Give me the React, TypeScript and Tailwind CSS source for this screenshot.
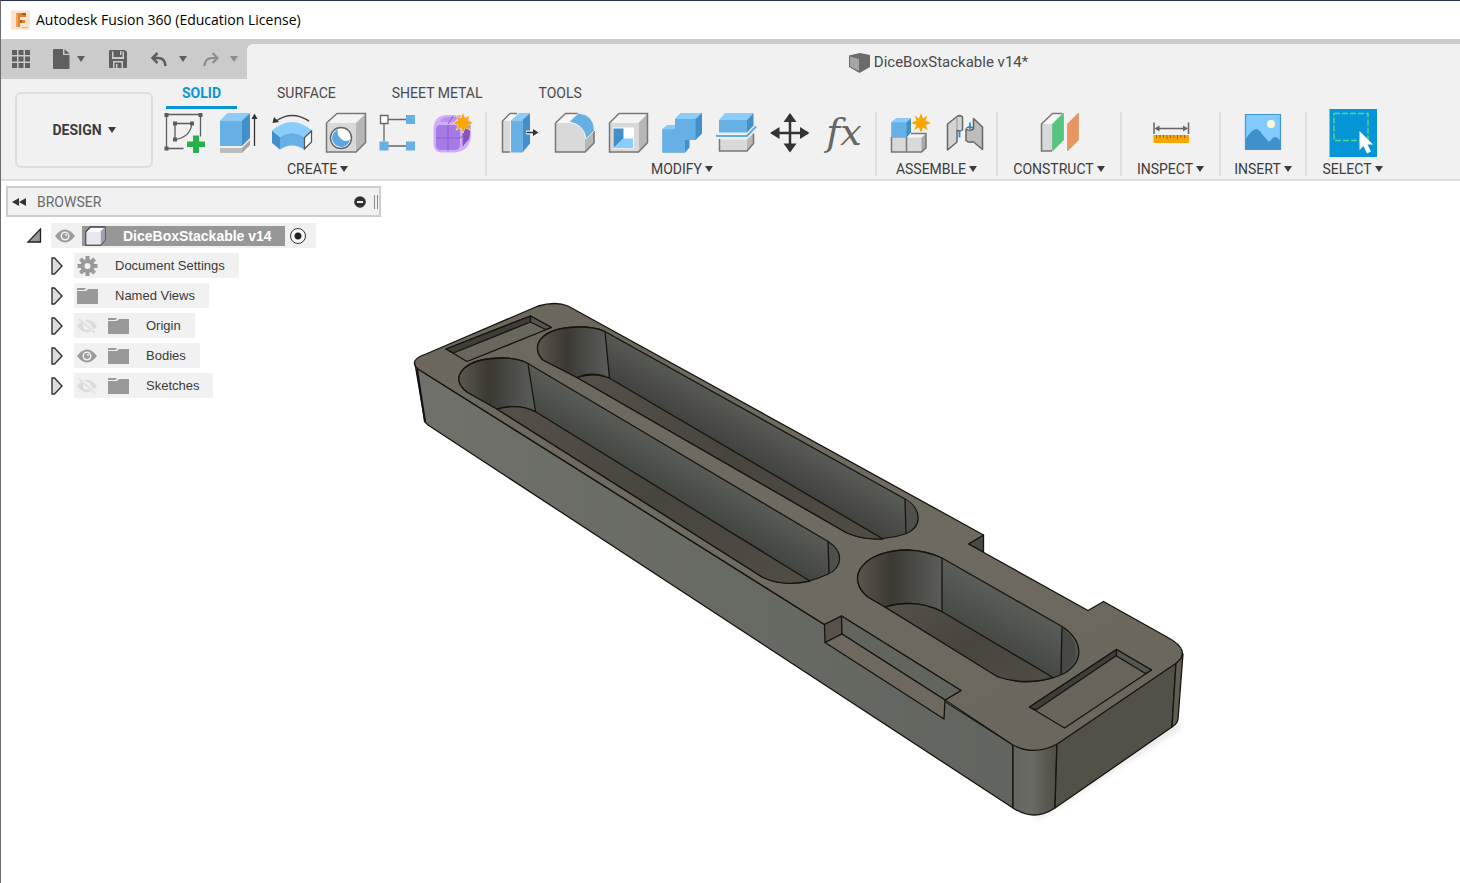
import React from 'react'

const UI = "font-[Roboto,'Liberation_Sans',sans-serif]"

const Caret = ({ className = '' }: { className?: string }) => (
  <svg width="8" height="6" viewBox="0 0 8 6" className={className} aria-hidden="true">
    <path d="M0 0h8L4 6z" fill="currentColor" />
  </svg>
)

const Star = ({ x, y }: { x: number; y: number }) => (
  <path
    transform={`translate(${x} ${y})`}
    d="M0-10 2-4.500 6.500-7.500 4.500-2.500 10 0 4.500 2 7 7 2 4.500 0 10-2 4.500-7 7-4.500 2-10 0-4.500-2.500-6.500-7.500-2-4.500z"
    fill="#f9a602"
    stroke="#f1f1f1"
    strokeWidth="1"
    paintOrder="stroke"
  />
)

const Tool = ({ label, children }: { label: string; children: React.ReactNode }) => (
  <button type="button" aria-label={label} className="h-12 w-[54px] shrink-0">
    <svg width="54" height="48" viewBox="0 0 54 48" aria-hidden="true">
      {children}
    </svg>
  </button>
)

const Group = ({ label, className, children }: { label: string; className: string; children: React.ReactNode }) => (
  <div className={`flex flex-col items-center ${className}`}>
    <div className="flex h-12">{children}</div>
    <button type="button" className="mt-1 flex h-4 items-center gap-[3px] text-sm leading-4 text-[#3c3c3c]">
      {label}
      <Caret />
    </button>
  </div>
)

const Divider = () => <div className="mt-[3px] h-16 w-0.5 shrink-0 bg-[#dfdfdf]" />

const TitleBar = () => (
  <header className="flex h-[38px] items-center gap-[5px] bg-white pl-2.5">
    <svg width="20" height="20" viewBox="0 0 20 20" aria-hidden="true">
      <rect width="19" height="19" x="0" y="0.500" fill="#fbe3cf" />
      <path d="M5 3h10v4H9v3h5v3H9v4H5z" fill="#dd8434" />
      <path d="M5 3h2v14H5z" fill="#f0a355" />
      <path d="M11 3h4v2h-4zM9 10h2v3H9z" fill="#a75a1c" />
      <path d="M11 17h6v1h-6z" fill="#eeb27c" />
    </svg>
    <h1 className="font-['Open_Sans','Noto_Sans',sans-serif] text-sm text-black">
      Autodesk Fusion 360 (Education License)
    </h1>
  </header>
)

const QuickBar = () => (
  <div className="flex h-10 bg-[#cbcbcb]">
    <div className="flex h-10 w-[246px] shrink-0 items-center pl-[11px] text-[#5f5f5f]">
      <button type="button" aria-label="Data panel">
        <svg width="18" height="18" viewBox="0 0 18 18" fill="currentColor" aria-hidden="true">
          <path d="M0 0h5v5H0zM6.500 0h5v5h-5zM13 0h5v5h-5zM0 6.500h5v5H0zM6.500 6.500h5v5h-5zM13 6.500h5v5h-5zM0 13h5v5H0zM6.500 13h5v5h-5zM13 13h5v5h-5z" />
        </svg>
      </button>
      <button type="button" aria-label="File" className="ml-[23px] flex items-center gap-[7px]">
        <svg width="17" height="20" viewBox="0 0 17 20" fill="currentColor" aria-hidden="true">
          <path d="M1 0h9v6h6.500v13q0 1-1 1H1q-1 0-1-1V1q0-1 1-1zM11.500 0l5 4.800h-5z" />
        </svg>
        <Caret />
      </button>
      <button type="button" aria-label="Save" className="ml-6">
        <svg width="18" height="18" viewBox="0 0 18 18" aria-hidden="true">
          <path d="M1 0h15l2 2v15q0 1-1 1H1q-1 0-1-1V1q0-1 1-1z" fill="#5f5f5f" />
          <path d="M3 1.500h1.500V7h9V1.500H15V9H3zM4 11h10v7h-1.500v-5.500h-7V18H4z" fill="#cbcbcb" />
          <path d="M7 14h1.500v4H7zM11 1h1.500v4H11z" fill="#cbcbcb" />
        </svg>
      </button>
      <button type="button" aria-label="Undo" className="ml-6 flex items-center gap-3">
        <svg width="16" height="15" viewBox="0 0 16 15" fill="none" stroke="currentColor" strokeWidth="2.500" aria-hidden="true">
          <path d="M6.500 1 1.500 6l5 5M2 6h5q7 0 7.500 8" />
        </svg>
        <Caret />
      </button>
      <button type="button" aria-label="Redo" className="ml-4 flex items-center gap-[11px] text-[#8c8c8c]">
        <svg width="16" height="15" viewBox="0 0 16 15" fill="none" stroke="currentColor" strokeWidth="2.200" aria-hidden="true">
          <path d="M9.500 1l5 5-5 5M14 6H9Q2 6 1.500 14" />
        </svg>
        <Caret />
      </button>
    </div>
    <div className="mt-[5px] flex flex-1 items-center justify-center gap-1 rounded-tl-md bg-[#f1f1f1] pt-0.5 pl-[170px] text-[15px] text-[#4a4a4a]">
      <svg width="21" height="20" viewBox="0 0 21 20" aria-hidden="true">
        <path d="M0 2.500 11 0l10 2v12L10.500 20 0 14z" fill="#6a6a6a" />
        <path d="M1 3.500 10 6v12L1 13.500z" fill="#a5a5a5" />
      </svg>
      <h2>DiceBoxStackable v14*</h2>
    </div>
  </div>
)

const Tabs = () => (
  <nav className="flex gap-6 pl-2 text-sm leading-4 text-[#4a4a4a]">
    <a href="#solid" aria-current="page" className="border-b-[3px] border-[#0696d7] px-4 pb-[5px] font-bold text-[#0696d7]">SOLID</a>
    <a href="#surface" className="px-4">SURFACE</a>
    <a href="#sheet-metal" className="px-4">SHEET METAL</a>
    <a href="#tools" className="px-4">TOOLS</a>
  </nav>
)

const CreateTools = () => (
  <>
    <Tool label="Create Sketch">
      <g fill="none" stroke="#5c5c5c" strokeWidth="1.300">
        <path d="M8.500 5.500h34v22M8.500 5.500v34h17M17 14.500h17M17 14.500v16M34 14.500q-2 14-17 16" />
      </g>
      <path d="M6.500 4h4v4h-4zM40.500 4h4v4h-4zM6.500 37.500h4v4h-4zM15 12.500h4v4h-4zM32 12.500h4v4h-4zM15 28.500h4v4h-4z" fill="#5c5c5c" />
      <path d="M35 26.500h6v6h6v5.500h-6v6h-6v-6h-6v-5.500h6z" fill="#26b14c" />
    </Tool>
    <Tool label="Extrude">
      <path d="M8 39h22l8-8v5l-8 8H8z" fill="#a6a6a6" />
      <path d="M8 39h22v5H8z" fill="#bcbcbc" />
      <path d="M8 11.500 15.500 4H38l-8 7.500z" fill="#8accfb" />
      <path d="M8 11.500h22V37H8z" fill="#67b0e6" />
      <path d="M30 11.500 38 4v25l-8 8z" fill="#438fc9" />
      <path d="M42.500 37V9" stroke="#333" strokeWidth="1.300" />
      <path d="M42.500 4.500 45.500 10h-6z" fill="#333" />
    </Tool>
    <Tool label="Revolve">
      <path d="M10 12q16-11 33 0" fill="none" stroke="#444" strokeWidth="1.500" />
      <path d="M6.500 14 8 8l5 5z" fill="#333" />
      <path d="M6 21.500 14 28v12.500L6 34z" fill="#438fc9" />
      <path d="M14 28q12-8 24 0v12.500q-12-8-24 0z" fill="#67b0e6" />
      <path d="M6 21.500q20-17 40 0L38 28q-12-8-24 0z" fill="#8accfb" />
      <path d="M38.500 28.500 45.500 22v11l-7 7z" fill="#fff" stroke="#555" strokeWidth="1.300" />
    </Tool>
    <Tool label="Hole">
      <path d="M6 14 16.500 4H46v30L36 43.500H6z" fill="#f3f3f3" />
      <path d="M36 14 46 4v30l-10 9.500z" fill="#b7b7b7" />
      <path d="M6 14h30v29.500H6z" fill="#d9d9d9" />
      <path d="M6.500 14 17 4.500h28.500v29L36 43H6.500z" fill="none" stroke="#777" strokeWidth="1.500" />
      <circle cx="21" cy="29" r="10.500" fill="#fff" stroke="#666" strokeWidth="1.500" />
      <path d="M18 20.500a9 9 0 1 0 12 10q-4 3-8 0-6-4-4-10z" fill="#5aa7e0" />
    </Tool>
    <Tool label="Pattern">
      <path d="M14 10.500h18M10 14.500v18M14 37h18" stroke="#666" strokeWidth="1.300" />
      <path d="M6.500 6.500h7.500v8H6.500z" fill="#fff" stroke="#666" strokeWidth="1.300" />
      <path d="M32 6h9v9h-9zM5.500 32.500h9v9h-9zM32 32.500h9v9h-9z" fill="#67b0e6" />
    </Tool>
    <Tool label="Create Form">
      <path d="M5.500 20Q6 7 18 6h13q12 0 12 12v9q-1 16-18 16.500H14q-8 0-8.500-8z" fill="#cfadfb" />
      <path d="M8 21q0-5 5-5h14q5 0 5 5v15q0 5-5 5H13q-5 0-5-5z" fill="#a67be6" />
      <path d="M12 13q2-5 8-5h10l-4 5z" fill="#b98ff5" />
      <path d="M35 19l6-4q2 8 0 15l-6 7z" fill="#8454bd" />
      <path d="M20 16v26M8 29h24l10-7M20 15l5-8M35 37V18" fill="none" stroke="#8a5cc6" strokeWidth="1" />
      <Star x={35} y={14} />
    </Tool>
  </>
)

const ModifyTools = () => (
  <>
    <Tool label="Press Pull">
      <path d="M9.500 12 17 4.500h8L17 12v31H9.500z" fill="#f7f7f7" />
      <path d="M9.500 12H17v31H9.500z" fill="#d9d9d9" />
      <path d="M24 4.500h-7L9.500 12v31H17" fill="none" stroke="#777" strokeWidth="1.500" />
      <path d="M18 11.500 26 4h11l-8 7.500z" fill="#8accfb" />
      <path d="M18 11.500h11.500v32H18z" fill="#67b0e6" />
      <path d="M29.500 11 37 4v30.500l-7.500 9z" fill="#438fc9" />
      <path d="M33 23.500h8" stroke="#f1f1f1" strokeWidth="4" />
      <path d="M33.500 23.500H42" stroke="#333" strokeWidth="1.500" />
      <path d="M40 20l5.500 3.500L40 27z" fill="#333" />
    </Tool>
    <Tool label="Fillet">
      <path d="M8 14 18 4h14l-9 10z" fill="#f7f7f7" />
      <path d="M8 14h15q15 1 15 16v13.500H8z" fill="#d9d9d9" />
      <path d="M38 30l9.500-8v12L38 43.500z" fill="#b7b7b7" />
      <path d="M31 4.500H18.500L8.500 14v29H38l9-9V22" fill="none" stroke="#777" strokeWidth="1.500" />
      <path d="M22 13 31.500 4Q47 6 47.500 21.500L39 30Q37 15 22 13z" fill="#67b0e6" stroke="#f7f7f7" strokeWidth="0.800" />
    </Tool>
    <Tool label="Shell">
      <path d="M8 14 17.500 4H47v30l-9.500 9.500H8z" fill="#f3f3f3" />
      <path d="M37.500 14 47 4v30l-9.500 9.500z" fill="#b7b7b7" />
      <path d="M8 14h29.500v29.500H8z" fill="#d9d9d9" />
      <path d="M8.500 14 18 4.500h28.500v29L37.500 43h-29z" fill="none" stroke="#777" strokeWidth="1.500" />
      <path d="M12 18.500h21v21H12z" fill="#fff" />
      <path d="M12.500 19.500h10v10l-10 9.500z" fill="#438fc9" />
      <path d="M22.500 29.500H32v9.500H12.500z" fill="#8accfb" />
    </Tool>
    <Tool label="Combine">
      <path d="M7.500 20.500 12 16.500h8V10l6-6h21v20.500L40.500 31h-6v7.500l-4.500 5H7.500z" fill="#438fc9" />
      <path d="M7.500 20.500H20V10h20.500v21H30v12.500H7.500z" fill="#67b0e6" />
      <path d="M20 10l6-6h21l-6.500 6zM7.500 20.500l4.500-4h8v4z" fill="#8accfb" />
    </Tool>
    <Tool label="Split Body">
      <path d="M10 11l6-7h28.500L38 11z" fill="#8accfb" />
      <path d="M10 11h28v12.500H10z" fill="#67b0e6" />
      <path d="M38 11l6.500-7v12.500L38 23.500z" fill="#438fc9" />
      <path d="M7 27h31l9-9.500" fill="none" stroke="#5aade9" strokeWidth="2" />
      <path d="M10.500 30.500H38V42H10.500z" fill="#d9d9d9" />
      <path d="M38 30.500l6.500-6v10L38 42z" fill="#b7b7b7" />
      <path d="M10.500 30v12H38l6.500-7.500V24.500" fill="none" stroke="#777" strokeWidth="1.500" />
    </Tool>
    <Tool label="Move/Copy">
      <path d="M9 24h36M27 6v36" stroke="#333" strokeWidth="2.500" />
      <path d="M27 4l6.500 9h-13zM27 43.500l6.500-9h-13zM7 24l9.500-6v12zM46.500 24 37 18v12z" fill="#333" />
    </Tool>
    <Tool label="Change Parameters">
      <text x="27" y="36" textAnchor="middle" fontFamily="'DejaVu Serif', 'Liberation Serif', serif" fontStyle="italic" fontSize="38" fill="#666">fx</text>
    </Tool>
  </>
)

const AssembleTools = () => (
  <>
    <Tool label="New Component">
      <path d="M8.500 28.500h15l4.500-4h15V39l-4.500 4.500h-30z" fill="#d9d9d9" />
      <path d="M38.500 28.500 43 24.500V39l-4.500 4.500z" fill="#a9a9a9" />
      <path d="M23.500 28.500l4.500-4h15l-4.500 4z" fill="#f5f5f5" />
      <path d="M8.500 28v15h30l4.500-4V24.500H28M23.500 28v15" fill="none" stroke="#777" strokeWidth="1.500" />
      <path d="M8.500 13.500l4.500-4h15v14l-4.500 5h-15z" fill="#438fc9" />
      <path d="M8.500 13.500h15v15h-15z" fill="#67b0e6" />
      <path d="M8.500 13.500l4.500-4h15l-4.500 4z" fill="#8accfb" />
      <Star x={38} y={14} />
    </Tool>
    <Tool label="Joint">
      <path d="M22.500 18v10.500" stroke="#1b8fe0" strokeWidth="1.800" />
      <g stroke="#666" strokeWidth="1.500" strokeLinejoin="round">
        <path d="M10.500 15 20 7.500q3-2 5.500.500v13q-3 2-5.500 0v12L10.500 41z" fill="#d4d4d4" />
        <path d="M36.500 9.500 45.500 18v22.500L36 32.500q-4 2-7-1V20q3 2.500 7.500 0z" fill="#bdbdbd" />
      </g>
      <path d="M20 9v12" fill="none" stroke="#999" strokeWidth="1" />
      <path d="M29.500 19q3-2 7 0" fill="none" stroke="#666" strokeWidth="1.300" />
      <path d="M33 13.500v6.500" stroke="#1b8fe0" strokeWidth="1.800" />
    </Tool>
  </>
)

const SelectTool = () => (
  <Tool label="Select">
    <path d="M3.500 0h47.500v48H3.500z" fill="#0696d7" />
    <path d="M8 4.500h34v27H8z" fill="none" stroke="#57d58c" strokeWidth="1.500" strokeDasharray="6 2" />
    <path d="M33.500 22v19l4-4 3.500 7.500 4-2-3.500-7H47z" fill="#fff" />
  </Tool>
)

const Ribbon = () => (
  <div className="flex h-[102px] gap-[5px] overflow-hidden border-b-2 border-[#dfdfdf] bg-[#f1f1f1] pl-[14px]">
    <button type="button" className="mt-[13px] flex h-[76px] w-[138px] shrink-0 items-center justify-center gap-1.5 rounded-md border-2 border-[#dedede] text-sm font-bold text-[#3c3c3c]">
      DESIGN
      <Caret />
    </button>
    <div className="flex min-w-0 flex-1 flex-col pt-1.5">
      <Tabs />
      <div className="flex">
        <Group label="CREATE" className="w-[327px] shrink-0 items-start! pr-1 *:last:ml-[129px]">
          <CreateTools />
        </Group>
        <Divider />
        <Group label="MODIFY" className="w-[388px] shrink-0 pl-0.5"><ModifyTools /></Group>
        <Divider />
        <Group label="ASSEMBLE" className="w-[119px] shrink-0"><AssembleTools /></Group>
        <Divider />
        <Group label="CONSTRUCT" className="w-[122px] shrink-0">
          <Tool label="Offset Plane">
            <path d="M9.500 15 20.500 4.500h10L20 15v27H9.500z" fill="#f7f7f7" />
            <path d="M9.500 15H20v27H9.500z" fill="#d9d9d9" />
            <path d="M20 42H9.500V15L20.500 4.500H30" fill="none" stroke="#777" strokeWidth="1.500" />
            <path d="M20.500 15 31.500 4v27L20.500 42z" fill="#55c57f" stroke="#45a96b" strokeWidth="0.500" />
            <path d="M35.500 15 46.500 4v27l-11 11z" fill="#e8955f" stroke="#d17f49" strokeWidth="0.500" />
          </Tool>
        </Group>
        <Divider />
        <Group label="INSPECT" className="w-[97px] shrink-0">
          <Tool label="Measure">
            <path d="M10 13.500V25M44.500 13.500V25M12 19.500h30" stroke="#666" strokeWidth="1.500" />
            <path d="M10.500 19.500l5-3v6zM44 19.500l-5-3v6z" fill="#666" />
            <path d="M9.500 26h35.500v8H9.500z" fill="#f9a602" />
            <path d="M12.500 26v3M16 26v3M19.500 26v3M23 26v4M26.500 26v3M30 26v3M33.500 26v4M37 26v3M40.500 26v3" stroke="#8a6a25" strokeWidth="1" />
          </Tool>
        </Group>
        <Divider />
        <Group label="INSERT" className="w-[84px] shrink-0">
          <Tool label="Insert Canvas">
            <path d="M9 5h36v36H9z" fill="#82caff" />
            <circle cx="35" cy="15" r="4" fill="#fffbcf" />
            <path d="M9 31q7-11 11-11 3 0 6 5l7 8q4-5 6-5 3 0 6 5v8H9z" fill="#3f91cc" />
            <path d="M9.500 5.500h35v35h-35z" fill="none" stroke="#4596cf" strokeWidth="1.200" />
          </Tool>
        </Group>
        <Divider />
        <Group label="SELECT" className="w-[91px] shrink-0"><SelectTool /></Group>
      </div>
    </div>
  </div>
)

const Eye = () => (
  <svg width="20" height="14" viewBox="0 0 20 14" className="shrink-0" aria-hidden="true">
    <path d="M0 7q10-13 20 0-10 13-20 0z" fill="#9b9b9b" />
    <circle cx="10" cy="7" r="4.500" fill="#f1f1f1" />
    <circle cx="10" cy="7" r="3" fill="#9b9b9b" />
    <circle cx="11" cy="6" r="1" fill="#f1f1f1" />
  </svg>
)

const EyeOff = () => (
  <svg width="20" height="16" viewBox="0 0 20 16" className="shrink-0" aria-hidden="true">
    <path d="M0 8q10-13 20 0-10 13-20 0z" fill="#dcdcdc" />
    <circle cx="10" cy="8" r="3.800" fill="#f1f1f1" />
    <path d="M3 0l15 15" stroke="#f1f1f1" strokeWidth="4" />
    <path d="M2 1l16 14" stroke="#dcdcdc" strokeWidth="1.500" />
  </svg>
)

const Folder = () => (
  <svg width="21" height="16" viewBox="0 0 21 16" className="shrink-0" aria-hidden="true">
    <path d="M0 0h9l-1.500 2H0zM0 3h9l2-2h10v15H0z" fill="#999" />
  </svg>
)

const Gear = () => (
  <svg width="21" height="20" viewBox="-10 -10 20 20" className="shrink-0" aria-hidden="true">
    <g fill="#999">
      <path d="M-2-10h4v20h-4z" />
      <path d="M-2-10h4v20h-4z" transform="rotate(45)" />
      <path d="M-2-10h4v20h-4z" transform="rotate(90)" />
      <path d="M-2-10h4v20h-4z" transform="rotate(135)" />
      <circle r="7" />
    </g>
    <circle r="3" fill="#f1f1f1" />
  </svg>
)

const rows = [
  { name: 'Document Settings', icon: 'gear', eye: '' },
  { name: 'Named Views', icon: 'folder', eye: '' },
  { name: 'Origin', icon: 'folder', eye: 'off' },
  { name: 'Bodies', icon: 'folder', eye: 'on' },
  { name: 'Sketches', icon: 'folder', eye: 'off' },
]

const Browser = () => (
  <aside className="w-[399px] shrink-0 pt-[5px] pl-[5px]">
    <div className="flex h-[31px] w-[375px] items-center border-2 border-[#cdcdcd] bg-[#f1f1f1] pl-1 text-sm text-[#6a6a6a]">
      <button type="button" aria-label="Collapse browser">
        <svg width="14" height="8" viewBox="0 0 14 8" aria-hidden="true">
          <path d="M7 0v8L0 4zM14 0v8L7 4z" fill="#333" />
        </svg>
      </button>
      <span className="ml-[11px]">BROWSER</span>
      <button type="button" aria-label="Minimize browser" className="ml-auto">
        <svg width="12" height="12" viewBox="0 0 12 12" aria-hidden="true">
          <circle cx="6" cy="6" r="5.800" fill="#333" />
          <path d="M3 5h6v2H3z" fill="#f1f1f1" />
        </svg>
      </button>
      <div className="mr-px ml-2 h-3.5 w-1 border-x border-[#888]" />
    </div>
    <div className="font-['Liberation_Sans',Arial,sans-serif] text-[13px] text-[#3a3a3a]">
      <div className="mt-1.5 flex h-[25px] items-center pl-5">
        <button type="button" aria-label="Collapse DiceBoxStackable">
          <svg width="16" height="15" viewBox="0 0 16 15" aria-hidden="true">
            <path d="M14.500 1v13H2z" fill="#999" stroke="#222" strokeWidth="1.300" />
          </svg>
        </button>
        <div className="ml-[9px] flex h-[25px] w-[265px] items-center bg-[#f1f1f1] pl-1">
          <Eye />
          <div className="ml-[7px] flex h-5 w-[203px] items-center bg-[#979797] pl-[3px] text-sm font-bold text-white">
            <svg width="22" height="20" viewBox="0 0 22 20" aria-hidden="true">
              <path d="M1 5.500 5.500 1H20v13l-4.500 5H1z" fill="#fff" stroke="#444" strokeWidth="1.400" />
              <path d="M15.500 5.500 20 1v13l-4.500 5z" fill="#9fa0ae" />
              <path d="M1.500 6h14v12.500h-14z" fill="#e6e7ef" />
            </svg>
            <span className="ml-4">DiceBoxStackable v14</span>
          </div>
          <input
            type="radio"
            defaultChecked
            aria-label="Activate component"
            className="ml-[5px] size-4 appearance-none rounded-full border border-[#333] bg-[radial-gradient(circle,#222_3px,#f8f8f8_4px)]"
          />
        </div>
      </div>
      <ul>
        {rows.map((row) => (
          <li key={row.name} className="mt-[5px] flex h-[25px] items-center pl-[45px]">
            <button type="button" aria-label={`Expand ${row.name}`}>
              <svg width="12" height="18" viewBox="0 0 12 18" aria-hidden="true">
                <path d="M1 1h2.500l7.500 8-7.500 8H1z" fill="#ddd" stroke="#333" strokeWidth="1.400" />
              </svg>
            </button>
            <div className="ml-[11px] flex h-[25px] items-center bg-[#f1f1f1] pr-3.5 pl-[3px]">
              {row.eye === 'on' && <Eye />}
              {row.eye === 'off' && <EyeOff />}
              {row.eye && <div className="w-[11px]" />}
              {row.icon === 'gear' ? <Gear /> : <Folder />}
              <span className="ml-[17px]">{row.name}</span>
            </div>
          </li>
        ))}
      </ul>
    </div>
  </aside>
)

// Isometric view of the tray: outer body first, then pockets, slots and notches
const Model = () => (
  <svg
    width="800"
    height="540"
    viewBox="400 290 800 540"
    role="img"
    aria-label="DiceBoxStackable model"
    className="mt-[109px] shrink-0"
    strokeLinejoin="round"
  >
    <defs>
      <linearGradient id="top" x1="0" y1="0" x2="1" y2="1">
        <stop offset="0" stopColor="#6c675d" />
        <stop offset="0.500" stopColor="#706b61" />
        <stop offset="1" stopColor="#6b665c" />
      </linearGradient>
      <linearGradient id="front" x1="0" y1="0" x2="1" y2="0">
        <stop offset="0" stopColor="#70716b" />
        <stop offset="0.500" stopColor="#686a64" />
        <stop offset="1" stopColor="#62645f" />
      </linearGradient>
      <linearGradient id="corner" x1="0" y1="0" x2="1" y2="0">
        <stop offset="0" stopColor="#62645f" />
        <stop offset="0.400" stopColor="#6b6b65" />
        <stop offset="1" stopColor="#504c44" />
      </linearGradient>
      <linearGradient id="wallA" gradientUnits="userSpaceOnUse" x1="760" y1="412" x2="731" y2="462">
        <stop offset="0" stopColor="#5b5d58" />
        <stop offset="1" stopColor="#3c3d3a" />
      </linearGradient>
      <linearGradient id="wallB" gradientUnits="userSpaceOnUse" x1="680" y1="450" x2="652" y2="498">
        <stop offset="0" stopColor="#5b5d58" />
        <stop offset="1" stopColor="#3e403c" />
      </linearGradient>
      <linearGradient id="wallC" gradientUnits="userSpaceOnUse" x1="1005" y1="593" x2="980" y2="640">
        <stop offset="0" stopColor="#5b5d58" />
        <stop offset="1" stopColor="#454743" />
      </linearGradient>
      <linearGradient id="round" x1="0" y1="0" x2="1" y2="0">
        <stop offset="0" stopColor="#5a574f" />
        <stop offset="0.400" stopColor="#3c3832" />
        <stop offset="0.700" stopColor="#4b4c48" />
        <stop offset="1" stopColor="#5b5d58" />
      </linearGradient>
      <linearGradient id="floor" x1="0" y1="0" x2="1" y2="1">
        <stop offset="0" stopColor="#55514a" />
        <stop offset="0.500" stopColor="#48443e" />
        <stop offset="1" stopColor="#504d45" />
      </linearGradient>
      <filter id="soft" x="-10%" y="-10%" width="120%" height="120%">
        <feGaussianBlur stdDeviation="3" />
      </filter>
    </defs>
    <path d="M1036 817 1180 725" stroke="#d6d6d6" strokeWidth="4" filter="url(#soft)" />

    <g stroke="#15140f" strokeWidth="1.300">
      <path d="M415 364 425 422l3 3L1013 808V745L825 625 418 369z" fill="url(#front)" />
      <path d="M417 369l8 53" fill="none" stroke="#111" strokeWidth="2" />
      <path d="M1013 744v64q21 14 42 0l2-65q-22 13-44 1z" fill="url(#corner)" />
      <path d="M1057 743l-2 65 117-81 4-64z" fill="#535047" />
      <path d="M1176 663l-4 64q6-4 6-8l5-65z" fill="#615d53" />
      <path d="M983.500 535v17l-15-8z" fill="#494841" />
      <path
        d="M418 369Q408 360 426 354L538 306q18-5 30 0L983.500 535l-15 9L1088 610.500l15.500-9L1167 637q26 14 8 27L1058 743.500q-23 13-45 1.500L945 700l16-9.500L841.500 616 824.500 624.500z"
        fill="url(#top)"
      />
    </g>

    <g stroke="#15140f" strokeWidth="1.300">
      {/* back pocket */}
      <path d="M543 360c-13-13-4-33 37-33q15 0 25 4.500L905 499c17 10 18 28 0 35q-32 10-58-1L577 377.500z" fill="url(#wallA)" />
      <path d="M577 377.500 543 360c-13-13-4-33 37-33q15 0 25 4.500l4.500 47q-17-8-32.500-1z" fill="url(#round)" />
      <path d="M905 499c16 10 16 25 1 34.500z" fill="#4f504c" stroke="none" />
      <path d="M905 499l1 34" />
      <path d="M577 377.500q18-6 33 1L883 539q-20 1-36-6z" fill="url(#floor)" />
      {/* front pocket */}
      <path d="M467 392c-18-13-6-34 36-34q14 0 25 5.500L828 541.500c16 10 15 26-1 33q-34 16-64 3L497 409z" fill="url(#wallB)" />
      <path d="M497 409 467 392c-18-13-6-34 36-34q14 0 25 5.500l7.500 48q-20-8-38.500-2.500z" fill="url(#round)" />
      <path d="M828.500 543c13 10 13 22 1 30z" fill="#4f504c" stroke="none" />
      <path d="M828 541.500l1 32" />
      <path d="M497 409q22-6 39 3L810 581q-26 6-47-3.500z" fill="url(#floor)" />
      {/* short pocket */}
      <path d="M868 597c-24-19-5-47 40-47q19 1 34 8l120 68.500c20 13 24 34 2 47q-32 15-66 3L885 607z" fill="url(#wallC)" />
      <path d="M885 607 868 597c-24-19-5-47 40-47q19 1 34 8v54q-30-14-57-5z" fill="url(#round)" />
      <path d="M1062.500 628c17 13 19 32-1 45z" fill="#474844" stroke="none" />
      <path d="M1062 626.500l-1 48" />
      <path d="M885 607q32-9 57.500 5L1053 677.500q-28 8-55-.500z" fill="url(#floor)" />
    </g>

    <g stroke="#15140f" strokeWidth="1.300">
      <path d="M446 349 530.500 316 551.500 327.500 467 361.500z" fill="#6b665b" />
      <path d="M446 349 530.500 316v6L453.500 353z" fill="#3f3d38" />
      <path d="M530.500 316 551.500 327.500l-6 2L530.500 322z" fill="#555650" />
      <path d="M1029.500 707 1116.500 649.500 1151.500 670 1064.500 728z" fill="#69645a" />
      <path d="M1029.500 707 1116.500 649.500v6L1036 710z" fill="#3f3d38" />
      <path d="M1116.500 649.500 1151.500 670l-6 3.500L1116.500 656z" fill="#555650" />
      <path d="M824.500 624.500 841.500 616l.500 18-17 8.500z" fill="#575149" />
      <path d="M841.500 616 961 690.500 945 700 842 634z" fill="#62645e" />
      <path d="M842 634 945 700l-1 19L825 642.500z" fill="#6e685e" />
    </g>
  </svg>
)

const App = () => {
  return (
    <div className={`min-h-screen border-t border-l border-t-[#26304f] border-l-[#6b6b6b] bg-white ${UI}`}>
      <TitleBar />
      <QuickBar />
      <Ribbon />
      <main className="flex overflow-hidden">
        <Browser />
        <Model />
      </main>
    </div>
  )
}

export default App
